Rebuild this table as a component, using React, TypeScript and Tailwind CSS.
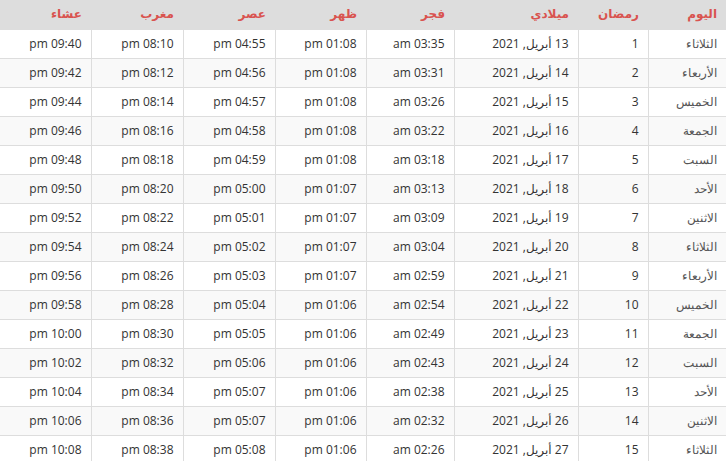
const ROWS: [string, number, string, string, string, string, string, string][] = [
  ["الثلاثاء", 1, "13 أبريل, 2021", "03:35 am", "01:08 pm", "04:55 pm", "08:10 pm", "09:40 pm"],
  ["الأربعاء", 2, "14 أبريل, 2021", "03:31 am", "01:08 pm", "04:56 pm", "08:12 pm", "09:42 pm"],
  ["الخميس", 3, "15 أبريل, 2021", "03:26 am", "01:08 pm", "04:57 pm", "08:14 pm", "09:44 pm"],
  ["الجمعة", 4, "16 أبريل, 2021", "03:22 am", "01:08 pm", "04:58 pm", "08:16 pm", "09:46 pm"],
  ["السبت", 5, "17 أبريل, 2021", "03:18 am", "01:08 pm", "04:59 pm", "08:18 pm", "09:48 pm"],
  ["الأحد", 6, "18 أبريل, 2021", "03:13 am", "01:07 pm", "05:00 pm", "08:20 pm", "09:50 pm"],
  ["الاثنين", 7, "19 أبريل, 2021", "03:09 am", "01:07 pm", "05:01 pm", "08:22 pm", "09:52 pm"],
  ["الثلاثاء", 8, "20 أبريل, 2021", "03:04 am", "01:07 pm", "05:02 pm", "08:24 pm", "09:54 pm"],
  ["الأربعاء", 9, "21 أبريل, 2021", "02:59 am", "01:07 pm", "05:03 pm", "08:26 pm", "09:56 pm"],
  ["الخميس", 10, "22 أبريل, 2021", "02:54 am", "01:06 pm", "05:04 pm", "08:28 pm", "09:58 pm"],
  ["الجمعة", 11, "23 أبريل, 2021", "02:49 am", "01:06 pm", "05:05 pm", "08:30 pm", "10:00 pm"],
  ["السبت", 12, "24 أبريل, 2021", "02:43 am", "01:06 pm", "05:06 pm", "08:32 pm", "10:02 pm"],
  ["الأحد", 13, "25 أبريل, 2021", "02:38 am", "01:06 pm", "05:07 pm", "08:34 pm", "10:04 pm"],
  ["الاثنين", 14, "26 أبريل, 2021", "02:32 am", "01:06 pm", "05:07 pm", "08:36 pm", "10:06 pm"],
  ["الثلاثاء", 15, "27 أبريل, 2021", "02:26 am", "01:06 pm", "05:08 pm", "08:38 pm", "10:08 pm"],
];

const HEADERS = ["اليوم", "رمضان", "ميلادي", "فجر", "ظهر", "عصر", "مغرب", "عشاء"];
const WIDTHS = ["w-[78px]", "w-[70px]", "w-[124px]", "w-[88px]", "w-[91px]", "w-[92px]", "w-[92px]", "w-[91px]"];

export default function App() {
  return (
    <div dir="rtl" className="w-[726px] overflow-hidden bg-white font-['Open_Sans','DejaVu_Sans',sans-serif] text-[12px] text-[#333]">
      <table className="w-[726px] table-fixed border-collapse">
        <thead>
          <tr className="h-[29px] bg-[#dddddd]">
            {HEADERS.map((h, i) => (
              <th key={h} className={`${WIDTHS[i]} px-[9px] text-right text-[12px] font-bold text-[#d9534f]`}>
                {h}
              </th>
            ))}
          </tr>
        </thead>
        <tbody>
          {ROWS.map((r, idx) => (
            <tr key={idx} className={`h-[29px] ${idx % 2 === 1 ? "bg-[#f9f9f9]" : "bg-white"}`}>
              {r.map((c, i) => (
                <td
                  key={i}
                  className={`border border-[#dddddd] px-[9px] text-right ${i === 7 ? "border-l-0" : ""} ${i === 0 ? "border-r-0 font-light text-[#555]" : ""}`}
                >
                  {c}
                </td>
              ))}
            </tr>
          ))}
        </tbody>
      </table>
    </div>
  );
}
